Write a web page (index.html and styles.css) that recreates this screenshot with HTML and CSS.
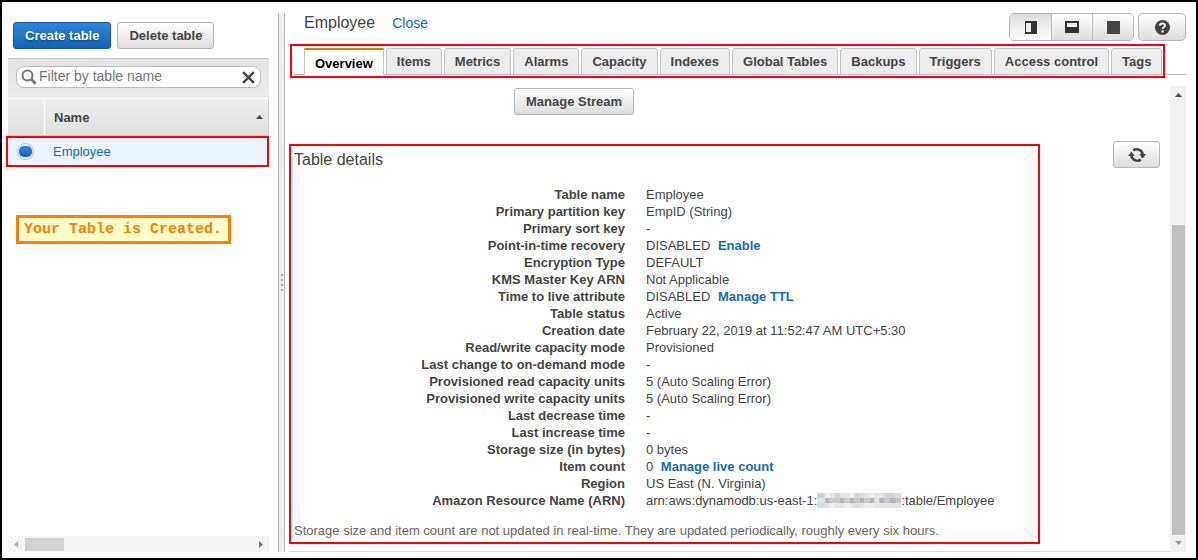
FILE: index.html
```html
<!DOCTYPE html>
<html lang="en">
<head>
<meta charset="utf-8">
<title>Employee</title>
<link rel="stylesheet" href="styles.css">
</head>
<body>
<div class="shell">
  <aside class="sidebar">
    <div class="actions">
      <button class="btn btn-primary" type="button">Create table</button>
      <button class="btn" type="button">Delete table</button>
    </div>
    <div class="filter-bar">
      <div class="search">
        <svg class="search-icon" viewBox="0 0 16 16" aria-hidden="true"><circle cx="6.5" cy="6.5" r="5" fill="none" stroke="#777" stroke-width="2"/><path d="M10.3 10.3l4.4 4.4" stroke="#777" stroke-width="3"/></svg>
        <input class="search-input" type="text" placeholder="Filter by table name" aria-label="Filter by table name">
        <button class="clear" type="button" aria-label="Clear filter"><svg viewBox="0 0 12 12"><path d="M1 1l10 10M11 1L1 11" stroke="#444" stroke-width="2.2"/></svg></button>
      </div>
    </div>
    <div class="list-head">
      <span class="head-cell"></span>
      <span class="head-name">Name</span>
      <svg class="sort" viewBox="0 0 7 4" aria-hidden="true"><path d="M0 4L3.500 0L7 4z" fill="#444"/></svg>
    </div>
    <div class="list-row">
      <input class="radio" type="radio" name="table" aria-label="Employee" checked>
      <a class="link" href="#">Employee</a>
    </div>
    <p class="note">Your Table is Created.</p>
    <div class="hscroll">
      <svg class="arrow-x" viewBox="0 0 4 7" aria-hidden="true"><path d="M4 0v7L0 3.500z" fill="#b5b5b5"/></svg>
      <span class="hthumb"></span>
      <svg class="arrow-x" viewBox="0 0 4 7" aria-hidden="true"><path d="M0 0v7L4 3.500z" fill="#777"/></svg>
    </div>
  </aside>
  <div class="divider"><span class="grip"></span><span class="grip"></span><span class="grip"></span><span class="grip"></span></div>
  <main class="main">
    <header class="header">
      <h1 class="title">Employee</h1>
      <a class="close link" href="#">Close</a>
      <div class="views">
        <button class="view active" type="button" aria-label="Side view"><svg width="12" height="13" viewBox="0 0 12 13"><path d="M0 0h12v13H0z" fill="#333"/><path d="M1 2h5v9H1z" fill="#eee"/></svg></button>
        <button class="view" type="button" aria-label="Bottom view"><svg width="14" height="12" viewBox="0 0 14 12"><path d="M0 0h14v12H0z" fill="#333"/><path d="M2 2h10v4H2z" fill="#f4f4f4"/></svg></button>
        <button class="view" type="button" aria-label="Full view"><svg width="13" height="13" viewBox="0 0 13 13"><path d="M0 0h13v13H0z" fill="#444"/></svg></button>
      </div>
      <button class="help" type="button" aria-label="Help"><svg width="15" height="15" viewBox="0 0 15 15"><circle cx="7.5" cy="7.5" r="7.5" fill="#444"/><path d="M4.900 5.800C5 2.800 10 2.800 10 5.600C10 7.300 7.600 7.300 7.600 9" fill="none" stroke="#eee" stroke-width="2"/><path d="M6.500 10.300h2.200v2.100H6.500z" fill="#eee"/></svg></button>
    </header>
    <nav class="tabs">
      <button class="tab current" type="button">Overview</button>
      <button class="tab" type="button">Items</button>
      <button class="tab" type="button">Metrics</button>
      <button class="tab" type="button">Alarms</button>
      <button class="tab" type="button">Capacity</button>
      <button class="tab" type="button">Indexes</button>
      <button class="tab" type="button">Global Tables</button>
      <button class="tab" type="button">Backups</button>
      <button class="tab" type="button">Triggers</button>
      <button class="tab" type="button">Access control</button>
      <button class="tab" type="button">Tags</button>
      <span class="tabs-mark"></span>
    </nav>
    <div class="pane">
      <div class="content">
        <button class="btn stream" type="button">Manage Stream</button>
        <div class="row">
          <section class="details">
            <h2 class="subtitle">Table details</h2>
            <dl class="props">
              <dt>Table name</dt><dd>Employee</dd>
              <dt>Primary partition key</dt><dd>EmpID (String)</dd>
              <dt>Primary sort key</dt><dd>-</dd>
              <dt>Point-in-time recovery</dt><dd>DISABLED <a class="action" href="#">Enable</a></dd>
              <dt>Encryption Type</dt><dd>DEFAULT</dd>
              <dt>KMS Master Key ARN</dt><dd>Not Applicable</dd>
              <dt>Time to live attribute</dt><dd>DISABLED <a class="action" href="#">Manage TTL</a></dd>
              <dt>Table status</dt><dd>Active</dd>
              <dt>Creation date</dt><dd>February 22, 2019 at 11:52:47 AM UTC+5:30</dd>
              <dt>Read/write capacity mode</dt><dd>Provisioned</dd>
              <dt>Last change to on-demand mode</dt><dd>-</dd>
              <dt>Provisioned read capacity units</dt><dd>5 (Auto Scaling Error)</dd>
              <dt>Provisioned write capacity units</dt><dd>5 (Auto Scaling Error)</dd>
              <dt>Last decrease time</dt><dd>-</dd>
              <dt>Last increase time</dt><dd>-</dd>
              <dt>Storage size (in bytes)</dt><dd>0 bytes</dd>
              <dt>Item count</dt><dd>0 <a class="action" href="#">Manage live count</a></dd>
              <dt>Region</dt><dd>US East (N. Virginia)</dd>
              <dt>Amazon Resource Name (ARN)</dt>
              <dd class="arn"><span>arn:aws:dynamodb:us-east-1:</span><svg class="redacted" viewBox="0 0 85 15" aria-hidden="true"><path d="M0 0h85v15H0z" fill="#e4e4e6"/><path d="M0 0h8v5H0zM18 0h5v5h-5zM38 0h5v5h-5zM68 0h10v5h-10z" fill="#d2d2d5"/><path d="M8 5h5v5H8zM23 5h5v5h-5zM33 5h5v5h-5zM43 5h5v5h-5zM53 5h5v5h-5zM63 5h5v5h-5zM73 5h7v5h-7z" fill="#b5b6bb"/><path d="M13 5h10v5H13zM28 5h5v5h-5zM38 5h5v5h-5zM48 5h5v5h-5zM68 5h5v5h-5zM80 5h5v5h-5z" fill="#cbc8c7"/><path d="M8 0h5v5H8zM33 0h5v5h-5zM28 10h5v5h-5zM53 0h5v5h-5zM13 10h5v5h-5zM48 10h10v5H48z" fill="#efefef"/><path d="M43 0h5v5h-5zM78 0h7v5h-7zM38 10h5v5h-5zM0 10h8v5H0z" fill="#d8dde2"/></svg><span>:table/Employee</span></dd>
            </dl>
            <p class="foot">Storage size and item count are not updated in real-time. They are updated periodically, roughly every six hours.</p>
          </section>
          <button class="btn refresh" type="button" aria-label="Refresh"><svg width="18" height="16" viewBox="0 0 18 16"><path d="M5.200 3.400A6 6 0 0 1 14.700 8M12.800 12.600A6 6 0 0 1 3.300 8" fill="none" stroke="#444" stroke-width="2.600"/><path d="M11.200 7H18l-3.400 4.600zM0 9h6.800L3.400 4.400z" fill="#444"/></svg></button>
        </div>
      </div>
      <div class="vscroll">
        <svg class="arrow-y" viewBox="0 0 7 4" aria-hidden="true"><path d="M0 4L3.500 0L7 4z" fill="#444"/></svg>
        <span class="vthumb"></span>
        <svg class="arrow-y" viewBox="0 0 7 4" aria-hidden="true"><path d="M0 0L3.500 4L7 0z" fill="#999"/></svg>
      </div>
    </div>
  </main>
</div>
</body>
</html>
```
FILE: styles.css
```css
* { box-sizing: border-box; }
body { margin: 0; font: 13px/17px "Liberation Sans", Arial, sans-serif; color: #444; background: #fff; }
button, input { font: inherit; color: inherit; margin: 0; }
svg { display: block; flex: none; }
h1, h2, p, dl, dd { margin: 0; }
a { text-decoration: none; }
.link, .action { color: #146eb4; }

.shell { display: flex; min-height: 100vh; border: 2px solid #000; padding: 11px 10px 6px 4px; }

.sidebar { flex: none; width: 263px; padding-top: 9px; display: flex; flex-direction: column; }
.actions { display: flex; gap: 6px; padding-left: 7px; margin-bottom: 9px; }
.btn { height: 27px; padding: 0 11px; border: 1px solid #b8b8b8; border-radius: 3px; background: linear-gradient(#fff, #ddd); font-weight: bold; white-space: nowrap; }
.btn-primary { color: #fff; border-color: #0f59a8; background: linear-gradient(#2f86dd, #1264b8); text-shadow: 0 1px 2px #093d70; }

.filter-bar { margin-left: 2px; padding: 7px 8px 9px; height: 40px; border-top: 1px solid #c8c8c8; background: linear-gradient(#e4e4e4, #ebebeb); }
.search { display: flex; align-items: center; height: 22px; padding: 0 5px 0 4px; border: 1px solid #bbb; border-radius: 8px; background: #fff; }
.search-icon { width: 16px; height: 16px; }
.search-input { flex: 1; min-width: 0; padding: 0 0 2px 2px; border: 0; background: none; font-size: 14px; outline: 0; }
.search-input::placeholder { color: #757575; opacity: 1; }
.clear { padding: 0; border: 0; background: none; }
.clear svg { width: 13px; height: 13px; }

.list-head { display: flex; align-items: center; height: 38px; margin-left: 2px; border-top: 1px solid #fff; border-right: 1px solid #ccc; border-bottom: 1px solid #ccc; background: linear-gradient(#eee, #dfdfdf); }
.head-cell { width: 37px; align-self: stretch; border-right: 1px solid #fff; }
.head-name { flex: 1; padding-left: 9px; font-weight: bold; }
.sort { width: 7px; height: 4px; margin-right: 5px; }
.list-row { display: flex; align-items: center; gap: 19px; height: 31px; padding-left: 9px; border: 2px solid #f00; background: #eaf3fe; }
.radio { appearance: none; width: 17px; height: 17px; border: 1px solid #bbb; border-radius: 50%; background: #eee; display: grid; place-content: center; }
.radio:checked::before { content: ""; width: 13px; height: 11px; border-radius: 5px; background: linear-gradient(#2f86dd, #1264b8); }

.note { align-self: flex-start; width: 215px; margin: 48px 0 0 10px; padding: 3px 5px; border: 3px solid #ff8000; background: #ffc; color: #ff8000; font: bold 15px/17px "Liberation Mono", monospace; white-space: nowrap; }

.hscroll { display: flex; align-items: center; height: 16px; margin: auto 0 0 2px; padding: 0 6px; background: #f4f4f4; }
.arrow-x { width: 4px; height: 7px; }
.hthumb { width: 39px; height: 13px; margin: 0 auto 0 7px; background: #d2d2d2; }

.divider { flex: none; display: flex; flex-direction: column; align-items: center; justify-content: center; gap: 3px; width: 7px; margin: 0 4px 0 9px; border: solid #b8b8b8; border-width: 0 1px; background: #eee; }
.grip { width: 2px; height: 2px; background: #aaa; }

.main { flex: 1; min-width: 0; display: flex; flex-direction: column; }
.header { display: flex; align-items: flex-start; padding-left: 15px; height: 28px; }
.title { font-size: 16px; line-height: 20px; font-weight: normal; }
.close { flex: 1; padding-left: 17px; font-size: 14px; line-height: 20px; }
.views { display: flex; margin-right: 4px; border: 1px solid #b8b8b8; border-radius: 5px; overflow: hidden; }
.view { display: grid; place-content: center; width: 41px; height: 26px; padding: 0; border: 0; border-left: 1px solid #bbb; background: linear-gradient(#fff, #ddd); }
.view.active { border-left: 0; background: linear-gradient(#ddd, #fff); }
.help { display: grid; place-content: center; width: 48px; height: 28px; padding: 0; border: 1px solid #b8b8b8; border-radius: 5px; background: linear-gradient(#fff, #ddd); }

.tabs { position: relative; display: flex; gap: 2px; margin: 7px 0 0 5px; padding-left: 10px; box-shadow: inset 0 -1px #b8b8b8; }
.tab { height: 27px; padding: 0 10px; border: 1px solid #c4c4c4; border-radius: 3px 3px 0 0; background: #ededed; font-weight: bold; white-space: nowrap; }
.tab.current { padding-top: 2px; border-top: 2px solid #e07b00; border-bottom-color: #fff; border-radius: 0; background: #fff; color: #000; }
.tabs-mark { position: absolute; top: -4px; bottom: -3px; left: -4px; right: 21px; border: 2px solid #f00; pointer-events: none; }

.pane { flex: 1; display: flex; margin-top: 11px; }
.content { flex: 1; min-width: 0; padding: 2px 10px 0 0; box-shadow: inset 0 -1px #ddd; }
.stream { display: block; margin: 0 0 26px 225px; }
.row { display: flex; align-items: flex-start; justify-content: space-between; gap: 20px; }
.details { flex: 0 1 751px; margin-top: 3px; padding: 4px 3px 3px; border: 2px solid #f00; }
.subtitle { font-size: 16px; line-height: 20px; font-weight: normal; margin-bottom: 16px; }
.props { display: grid; grid-template-columns: 331px 1fr; column-gap: 21px; margin-bottom: 13px; }
.props dt { text-align: right; font-weight: bold; }
.action { font-weight: bold; margin-left: 4px; }
.arn { display: flex; align-items: center; }
.redacted { width: 84px; height: 15px; }
.foot { color: #666; }
.refresh { flex: none; display: grid; place-content: center; width: 47px; padding: 0; }

.vscroll { flex: none; display: flex; flex-direction: column; align-items: center; width: 16px; padding: 7px 0; background: #f1f1f1; }
.arrow-y { width: 7px; height: 4px; }
.vthumb { width: 13px; height: 310px; margin: auto 0 6px; background: #c1c1c1; }
```
